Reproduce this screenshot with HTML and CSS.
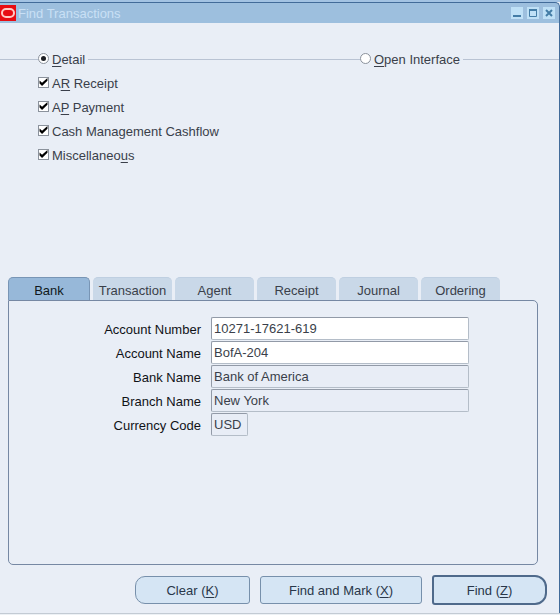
FILE: index.html
```html
<!DOCTYPE html>
<html lang="en">
<head>
	<meta charset="utf-8">
	<title>Find Transactions</title>
	<meta name="viewport" content="width=device-width, initial-scale=1">
	<link rel="stylesheet" href="styles.css">
</head>
<body>

<main class="window">
	<header class="titlebar">
		<svg class="logo" width="16" height="16" viewBox="0 0 16 16" aria-hidden="true">
			<rect width="16" height="16" fill="#e80c12"/>
			<rect x="2" y="4" width="12" height="8" rx="4" fill="none" stroke="#ffc9c4" stroke-width="2"/>
		</svg>
		<h1>Find Transactions</h1>
		<div class="window-buttons">
			<button type="button" aria-label="Minimize">
				<svg width="12" height="12" viewBox="0 0 12 12"><path d="M2 9h8" stroke="#437ca6" stroke-width="2"/></svg>
			</button>
			<button type="button" aria-label="Maximize">
				<svg width="12" height="12" viewBox="0 0 12 12"><path d="M2.500 2v7.500h7V2" fill="none" stroke="#437ca6"/><path d="M2 3h8" stroke="#437ca6" stroke-width="2"/></svg>
			</button>
			<button type="button" aria-label="Close">
				<svg width="12" height="12" viewBox="0 0 12 12"><path d="M3 3l6 6M9 3l-6 6" stroke="#437ca6" stroke-width="2"/></svg>
			</button>
		</div>
	</header>

	<form class="find-form">
		<div class="source">
			<label class="option"><input type="radio" name="source" checked><span><u>D</u>etail</span></label>
			<label class="option"><input type="radio" name="source"><span><u>O</u>pen Interface</span></label>
		</div>
		<div class="types">
			<label class="option"><input type="checkbox" checked><span>A<u>R</u> Receipt</span></label>
			<label class="option"><input type="checkbox" checked><span>A<u>P</u> Payment</span></label>
			<label class="option"><input type="checkbox" checked><span>Cash Management Cashflow</span></label>
			<label class="option"><input type="checkbox" checked><span>Miscellaneo<u>u</u>s</span></label>
		</div>

		<div class="tabs" role="tablist">
			<button class="tab active" type="button" role="tab" aria-selected="true">Bank</button>
			<button class="tab" type="button" role="tab">Transaction</button>
			<button class="tab" type="button" role="tab">Agent</button>
			<button class="tab" type="button" role="tab">Receipt</button>
			<button class="tab" type="button" role="tab">Journal</button>
			<button class="tab" type="button" role="tab">Ordering</button>
		</div>
		<section class="panel">
			<div class="field">
				<label for="account-number">Account Number</label>
				<input id="account-number" type="text" value="10271-17621-619">
			</div>
			<div class="field">
				<label for="account-name">Account Name</label>
				<input id="account-name" type="text" value="BofA-204">
			</div>
			<div class="field">
				<label for="bank-name">Bank Name</label>
				<input id="bank-name" type="text" value="Bank of America" readonly>
			</div>
			<div class="field">
				<label for="branch-name">Branch Name</label>
				<input id="branch-name" type="text" value="New York" readonly>
			</div>
			<div class="field">
				<label for="currency">Currency Code</label>
				<input id="currency" class="short" type="text" value="USD" readonly>
			</div>
		</section>

		<div class="actions">
			<button class="clear" type="button">Clear (<u>K</u>)</button>
			<button class="mark" type="button">Find and Mark (<u>X</u>)</button>
			<button class="find" type="button">Find (<u>Z</u>)</button>
		</div>
	</form>
</main>

</body>
</html>
```

FILE: styles.css
```css
* {
	box-sizing: border-box;
}

body {
	margin: 0;
	background: #edf1f5;
}

body, button, input {
	font-family: "Liberation Sans", Arial, sans-serif;
	font-size: 13px;
	color: #3a3f4a;
}

u {
	text-underline-offset: 2px;
}

.window {
	display: flex;
	flex-direction: column;
	min-height: calc(100vh - 1px);
	border-top: 2px solid #a3c3e3;
	border-bottom: 1px solid #c3cbd4;
	background: #e9eef6;
}

/* title bar */
.titlebar {
	display: flex;
	align-items: center;
	height: 21px;
	padding-right: 4px;
	border-top: 1px solid #426b99;
	border-right: 1px solid #426b99;
	border-top-right-radius: 5px;
	background: #9dbfde;
}

.logo {
	flex: none;
}

.titlebar h1 {
	flex: 1;
	margin: 0 0 0 2px;
	font-size: 13px;
	font-weight: normal;
	color: #c9e0f5;
}

.window-buttons {
	display: flex;
	gap: 4px;
}

.window-buttons button {
	display: block;
	width: 12px;
	height: 12px;
	padding: 0;
	border: 0;
	background: #bfe0f6;
}

.window-buttons svg {
	display: block;
}

.find-form {
	flex: 1;
	display: flex;
	flex-direction: column;
	padding-top: 24px;
	border-right: 1px solid #426b99;
}

/* radio buttons and check boxes */
.option {
	display: flex;
	align-items: center;
	gap: 3px;
	height: 24px;
}

.option input {
	appearance: none;
	display: grid;
	place-items: center;
	width: 11px;
	height: 11px;
	margin: 0 0 2px;
	border: 1px solid #8b929c;
	background: #fff;
}

.option input[type="radio"] {
	border-radius: 50%;
}

.option input[type="radio"]:checked::before {
	content: "";
	width: 5px;
	height: 5px;
	border-radius: 50%;
	background: #1c1f24;
}

.option input[type="checkbox"]:checked::before {
	content: "";
	width: 9px;
	height: 9px;
	background: #000;
	clip-path: polygon(6% 34%, 34% 58%, 94% 6%, 94% 36%, 34% 94%, 6% 66%);
}

/* the rule runs through the row and breaks at each radio button */
.source {
	display: flex;
	align-items: center;
}

.source::before,
.source::after,
.source .option:first-of-type::after {
	content: "";
	height: 1px;
	background: #b9c3d3;
}

.source::before {
	width: 38px;
}

.source::after {
	width: 96px;
	margin-left: 3px;
}

.source .option:first-of-type,
.source .option:first-of-type::after {
	flex: 1;
}

.types {
	padding-left: 38px;
}

/* tabs */
.tabs {
	display: flex;
	gap: 3px;
	margin: 110px 0 0 8px;
}

.tab {
	width: 79px;
	height: 23px;
	padding: 3px 0 0;
	border: 0;
	border-top: 1px solid #bfcfe1;
	border-radius: 5px 5px 0 0;
	background: #c9d8e8;
}

.tab.active {
	width: 82px;
	border: 1px solid #7895b5;
	border-bottom: 0;
	background: #97b8d9;
	color: #101820;
}

.panel {
	flex: 1;
	margin: 0 21px 0 8px;
	padding: 15px 68px 15px 0;
	border: 1px solid #7688a3;
	border-radius: 0 5px 5px 5px;
}

.field {
	display: grid;
	grid-template-columns: 192px 1fr;
	gap: 10px;
	align-items: center;
	height: 24px;
}

.field label {
	padding-top: 2px;
	text-align: right;
	color: #101216;
}

.field input {
	width: 100%;
	height: 23px;
	padding: 0 2px;
	border: 1px solid #b4bdc8;
	border-top-color: #929aa7;
	border-left-color: #929aa7;
	border-radius: 2px;
	background: #fff;
}

.field input[readonly] {
	background: #e8edf6;
}

.field .short {
	width: 37px;
}

/* bottom buttons */
.actions {
	display: flex;
	align-items: center;
	justify-content: flex-end;
	gap: 10px;
	padding: 10px 12px 8px;
}

.actions button {
	height: 28px;
	padding: 0;
	border: 1px solid #7790ab;
	border-radius: 3px;
	background: #d5e5f4;
	color: #29374a;
}

.actions .clear {
	width: 115px;
	border-radius: 10px 3px 3px 10px;
}

.actions .mark {
	width: 162px;
}

.actions .find {
	width: 115px;
	height: 30px;
	border: 2px solid #4f6a8b;
	border-radius: 3px 12px 12px 3px;
}
```
